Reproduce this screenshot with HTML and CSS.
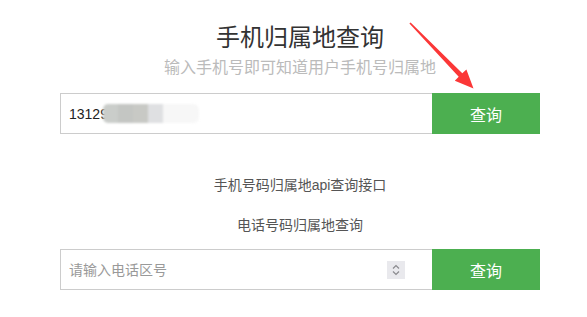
FILE: index.html
```html
<!DOCTYPE html>
<html lang="zh-CN">
<head>
<meta charset="utf-8">
<title>手机归属地查询</title>
<link rel="stylesheet" href="styles.css">
</head>
<body>
<div class="page">
  <h1 class="title">手机归属地查询</h1>
  <p class="subtitle">输入手机号即可知道用户手机号归属地</p>
  <form class="row row-first">
    <div class="field">
      <input class="field-input" type="text" value="13129">
      <span class="mosaic" aria-hidden="true">
        <i class="m1"></i><i class="m2"></i><i class="m3"></i><i class="m4"></i><i class="m5"></i>
      </span>
    </div>
    <button class="btn" type="button">查询</button>
  </form>
  <p class="link link-first">手机号码归属地api查询接口</p>
  <p class="link link-second">电话号码归属地查询</p>
  <form class="row row-second">
    <div class="field">
      <input class="field-input" type="text" placeholder="请输入电话区号">
      <span class="spin" aria-hidden="true">
        <svg width="18" height="18" viewBox="0 0 18 18"><path d="M6 7.5 L9 4.5 L12 7.5" fill="none" stroke="#8a8a8e" stroke-width="1.2"/><path d="M6 10.5 L9 13.5 L12 10.5" fill="none" stroke="#8a8a8e" stroke-width="1.2"/></svg>
      </span>
    </div>
    <button class="btn" type="button">查询</button>
  </form>
  <svg class="arrow" width="587" height="317" viewBox="0 0 587 317" aria-hidden="true">
    <polygon fill="#fb3737" points="410.6,22.4 462.3,73.3 466.4,69.4 473.5,88.5 454.8,80.8 458.7,76.7 409.4,23.6"/>
  </svg>
</div>
</body>
</html>
```
FILE: styles.css
```css
html, body {
  margin: 0;
  padding: 0;
  background: #ffffff;
}
body {
  font-family: "Liberation Sans", "Noto Sans CJK SC", sans-serif;
  width: 587px;
  height: 317px;
  overflow: hidden;
}
.page {
  position: relative;
  width: 480px;
  margin-left: 60px;
  padding-top: 23px;
  display: flex;
  flex-direction: column;
  align-items: stretch;
}
.title {
  margin: 0;
  font-size: 24px;
  line-height: 30px;
  font-weight: normal;
  color: #333333;
  text-align: center;
}
.subtitle {
  margin: 5px 0 0;
  font-size: 16px;
  line-height: 20px;
  color: #bbbbbb;
  text-align: center;
}
.row {
  margin: 0;
  display: flex;
  height: 41px;
}
.row-first { margin-top: 15px; }
.row-second { margin-top: 14px; }
.field {
  position: relative;
  flex: 1;
  display: flex;
  align-items: center;
  border: 1px solid #cccccc;
  border-right: none;
  background: #fff;
}
.field-input {
  flex: 1;
  min-width: 0;
  height: 100%;
  border: none;
  outline: none;
  padding: 0 0 0 8px;
  margin: 0;
  background: transparent;
  font-family: "Liberation Sans", "Noto Sans CJK SC", sans-serif;
  font-size: 14px;
  color: #222222;
}
.field-input::placeholder {
  color: #999999;
}
.mosaic {
  position: absolute;
  left: 42px;
  top: 10px;
  display: flex;
  height: 19px;
  filter: blur(0.8px);
}
.mosaic i {
  display: block;
  height: 100%;
}
.m1 { width: 15px; background: #cacdca; border-radius: 5px 0 0 5px; }
.m2 { width: 15px; background: #c4c6c3; }
.m3 { width: 15px; background: #c8c9c5; }
.m4 { width: 15px; background: #dfe0e2; }
.m5 { width: 36px; background: #f7f7f7; border-radius: 0 6px 6px 0; }
.spin {
  width: 18px;
  height: 18px;
  margin-right: 27px;
  background: #e9e9ed;
  display: flex;
}
.btn {
  width: 108px;
  height: 41px;
  border: none;
  margin: 0;
  padding: 0;
  background: #4caf50;
  color: #ffffff;
  font-family: "Liberation Sans", "Noto Sans CJK SC", sans-serif;
  font-size: 16px;
  cursor: pointer;
}
.link {
  margin: 0;
  font-size: 14px;
  line-height: 20px;
  color: #555555;
  text-align: center;
}
.link-first { margin-top: 41px; }
.link-second { margin-top: 20px; }
.arrow {
  position: absolute;
  left: -60px;
  top: 0;
  pointer-events: none;
}
```
